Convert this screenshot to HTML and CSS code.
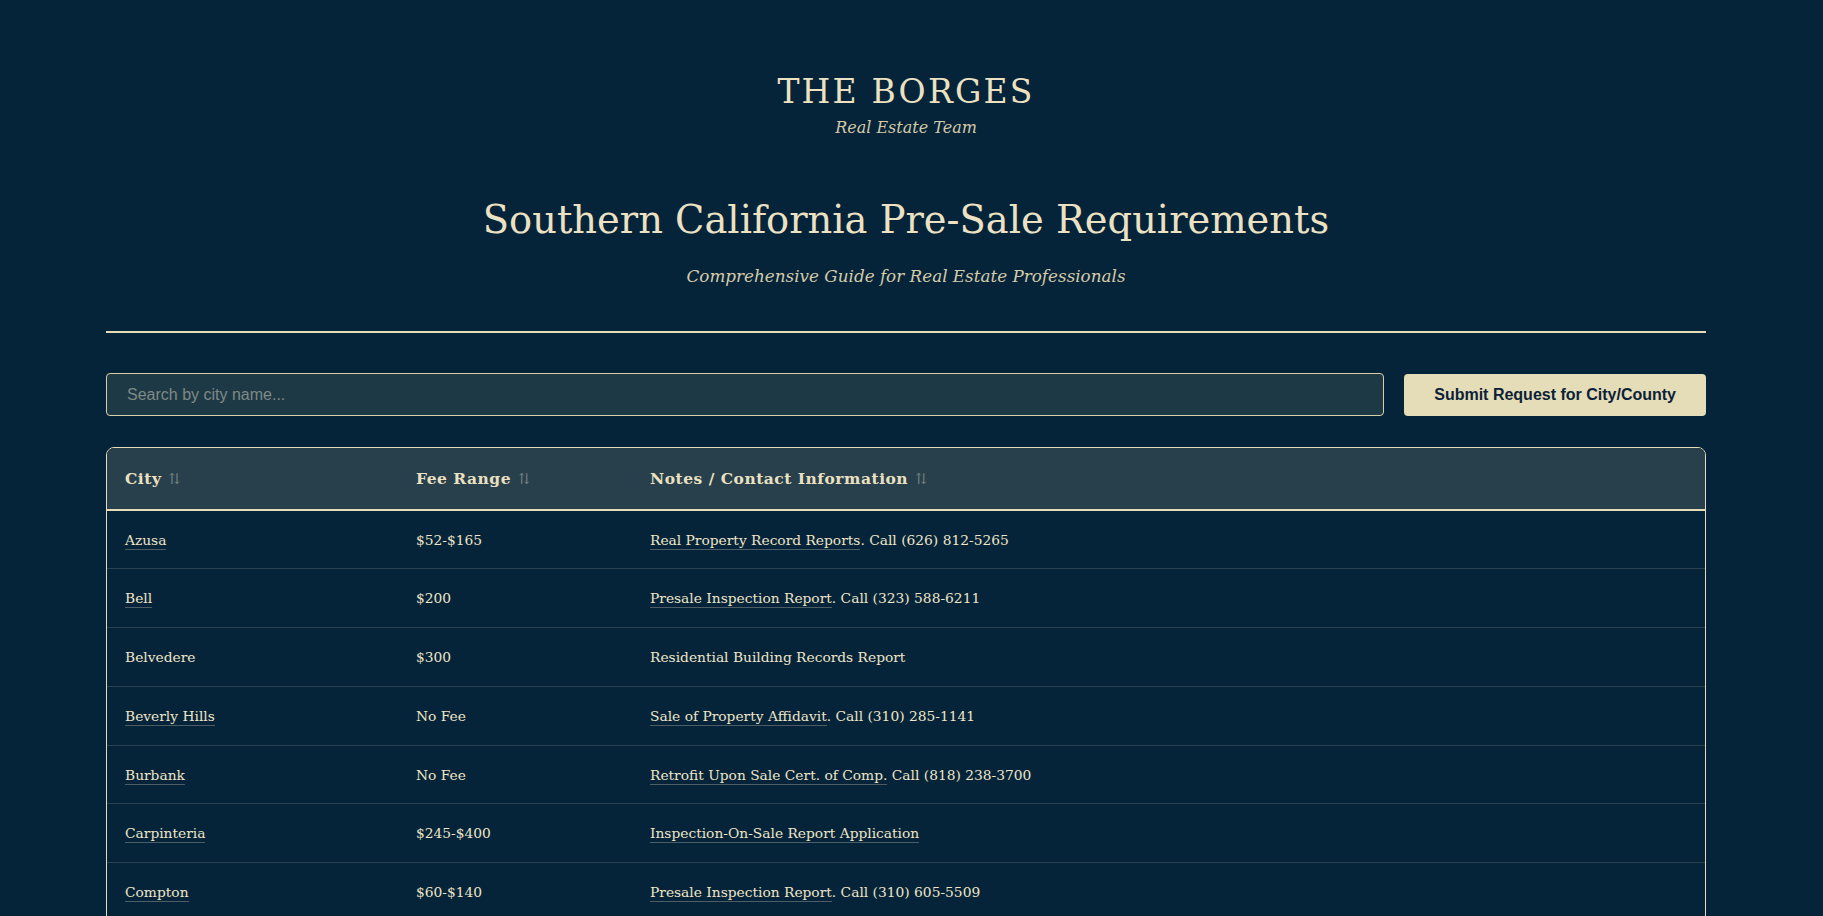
FILE: index.html
```html
<!DOCTYPE html>
<html lang="en">
<head>
    <meta charset="UTF-8">
    <meta name="viewport" content="width=device-width, initial-scale=1.0">
    <title>Southern California Pre-Sale Requirements</title>
    <link rel="stylesheet" href="styles.css">
</head>
<body>
    <div class="container">
        <header class="page-header">
            <div class="brand">THE BORGES</div>
            <div class="brand-sub">Real Estate Team</div>
            <h1>Southern California Pre-Sale Requirements</h1>
            <p class="subtitle">Comprehensive Guide for Real Estate Professionals</p>
        </header>

        <div class="controls">
            <input type="text" id="search" class="search" placeholder="Search by city name...">
            <button type="button" class="request-btn">Submit Request for City/County</button>
        </div>

        <div class="table-wrap">
            <table id="cityTable">
                <colgroup>
                    <col class="col-city">
                    <col class="col-fee">
                    <col>
                </colgroup>
                <thead>
                    <tr>
                        <th>City <span class="sort">&#8645;</span></th>
                        <th>Fee Range <span class="sort">&#8645;</span></th>
                        <th>Notes / Contact Information <span class="sort">&#8645;</span></th>
                    </tr>
                </thead>
                <tbody>
                    <tr>
                        <td><a href="#">Azusa</a></td>
                        <td>$52-$165</td>
                        <td><a href="#">Real Property Record Reports</a>. Call (626) 812-5265</td>
                    </tr>
                    <tr>
                        <td><a href="#">Bell</a></td>
                        <td>$200</td>
                        <td><a href="#">Presale Inspection Report</a>. Call (323) 588-6211</td>
                    </tr>
                    <tr>
                        <td>Belvedere</td>
                        <td>$300</td>
                        <td>Residential Building Records Report</td>
                    </tr>
                    <tr>
                        <td><a href="#">Beverly Hills</a></td>
                        <td>No Fee</td>
                        <td><a href="#">Sale of Property Affidavit</a>. Call (310) 285-1141</td>
                    </tr>
                    <tr>
                        <td><a href="#">Burbank</a></td>
                        <td>No Fee</td>
                        <td><a href="#">Retrofit Upon Sale Cert. of Comp.</a> Call (818) 238-3700</td>
                    </tr>
                    <tr>
                        <td><a href="#">Carpinteria</a></td>
                        <td>$245-$400</td>
                        <td><a href="#">Inspection-On-Sale Report Application</a></td>
                    </tr>
                    <tr>
                        <td><a href="#">Compton</a></td>
                        <td>$60-$140</td>
                        <td><a href="#">Presale Inspection Report</a>. Call (310) 605-5509</td>
                    </tr>
                </tbody>
            </table>
        </div>
    </div>

    <script>
        document.getElementById('search').addEventListener('input', function() {
            const term = this.value.toLowerCase();
            document.querySelectorAll('#cityTable tbody tr').forEach(function(row) {
                const city = row.cells[0].textContent.toLowerCase();
                row.style.display = city.includes(term) ? '' : 'none';
            });
        });
    </script>
</body>
</html>
```

FILE: styles.css
```css
body {
    margin: 0;
    padding: 0 11px 40px 0;
    background-color: #05243a;
    color: #ebe1c2;
    font-family: "DejaVu Serif", Georgia, serif;
}
.container {
    max-width: 1600px;
    margin: 0 auto;
}
.page-header {
    text-align: center;
    padding-top: 72px;
}
.brand {
    font-size: 33px;
    line-height: 40px;
    letter-spacing: 2.2px;
    color: #ece2c1;
}
.brand-sub {
    margin-top: 5px;
    font-size: 16px;
    line-height: 22px;
    font-style: italic;
    color: #d3c9a6;
}
h1 {
    margin: 57px 0 0;
    font-size: 38.4px;
    line-height: 48px;
    font-weight: normal;
    color: #ece2c3;
}
.subtitle {
    margin: 20px 0 0;
    font-size: 16.8px;
    line-height: 24px;
    font-style: italic;
    color: #d5cba9;
}
.page-header::after {
    content: "";
    display: block;
    height: 2px;
    margin-top: 43px;
    background-color: #e5dcb8;
}
.controls {
    display: flex;
    align-items: center;
    gap: 20px;
    margin-top: 40px;
    margin-bottom: 31px;
}
.search {
    flex: 1;
    height: 43px;
    box-sizing: border-box;
    padding: 0 20px;
    background-color: #1e3946;
    border: 1px solid #d8cea8;
    border-radius: 4px;
    color: #ebe1c2;
    font-family: "Liberation Sans", Arial, sans-serif;
    font-size: 16px;
    outline: none;
}
.search::placeholder {
    color: #7f8a85;
}
.request-btn {
    height: 42px;
    padding: 0 30px;
    background-color: #e5dcb8;
    color: #0b2236;
    border: none;
    border-radius: 4px;
    font-family: "Liberation Sans", Arial, sans-serif;
    font-size: 16px;
    font-weight: bold;
    cursor: pointer;
}
.request-btn:hover {
    background-color: #d9cfa6;
}
.table-wrap {
    border: 1px solid #e5dcb8;
    border-radius: 8px;
    overflow: hidden;
}
table {
    width: 100%;
    border-collapse: collapse;
    table-layout: fixed;
}
.col-city {
    width: 291px;
}
.col-fee {
    width: 234px;
}
th {
    padding: 19.5px 18px 19px;
    line-height: 22px;
    text-align: left;
    font-size: 15.5px;
    font-weight: bold;
    letter-spacing: 0.5px;
    background-color: #283f4c;
    color: #ebe1c2;
    border-bottom: 2px solid #e5dcb8;
}
.sort {
    font-size: 15px;
    line-height: 1;
    font-weight: normal;
    letter-spacing: 0;
    color: #6f807d;
    margin-left: 1px;
}
td {
    padding: 18px 18px 17.8px;
    line-height: 22px;
    font-size: 13.8px;
    color: #efe5c7;
    border-bottom: 1px solid #2a4250;
}
td a {
    color: #efe5c7;
    text-decoration: none;
    border-bottom: 1px solid #4b5e68;
    padding-bottom: 1px;
}
td a:hover {
    border-bottom-color: #e5dcb8;
}
```
